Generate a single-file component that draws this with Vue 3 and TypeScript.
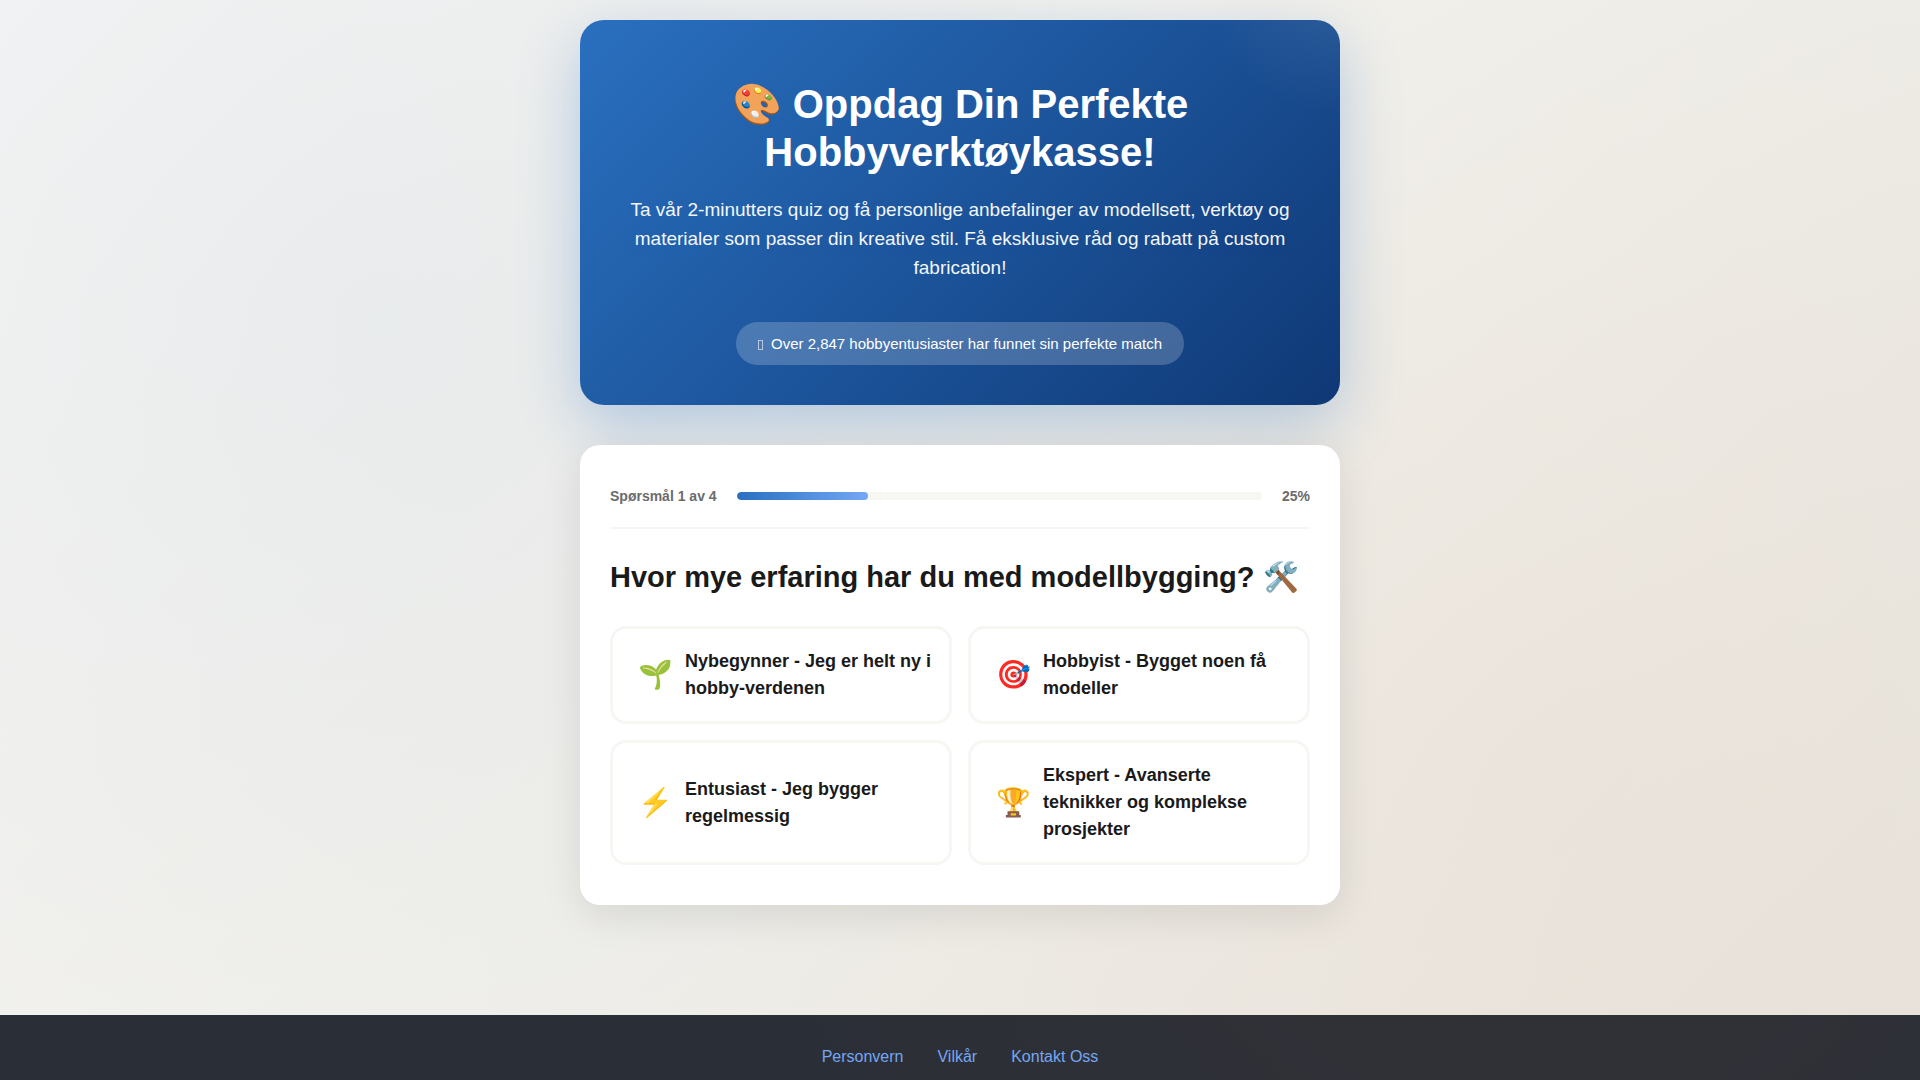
<script setup lang="ts">
import { computed, ref } from 'vue'

interface Option {
  id: string
  icon: string
  label: string
}

const step = ref(1)
const total = 4
const percent = computed(() => Math.round((step.value / total) * 100))

const options: Option[] = [
  { id: 'beginner', icon: '🌱', label: 'Nybegynner - Jeg er helt ny i hobby-verdenen' },
  { id: 'hobbyist', icon: '🎯', label: 'Hobbyist - Bygget noen få modeller' },
  { id: 'enthusiast', icon: '⚡', label: 'Entusiast - Jeg bygger regelmessig' },
  { id: 'expert', icon: '🏆', label: 'Ekspert - Avanserte teknikker og komplekse prosjekter' },
]
const selected = ref<string | null>(null)
</script>

<template>
  <div class="page">
    <main class="container">
      <section class="hero">
        <h1>🎨 Oppdag Din Perfekte Hobbyverktøykasse!</h1>
        <p class="lead">
          Ta vår 2-minutters quiz og få personlige anbefalinger av modellsett, verktøy og materialer
          som passer din kreative stil. Få eksklusive råd og rabatt på custom fabrication!
        </p>
        <div class="badge">
          <span class="badge-icon" aria-hidden="true"></span>
          <span>Over 2,847 hobbyentusiaster har funnet sin perfekte match</span>
        </div>
      </section>

      <section class="quiz">
        <div class="progress">
          <span>Spørsmål {{ step }} av {{ total }}</span>
          <div class="track" role="progressbar" aria-label="Fremdrift" :aria-valuenow="percent" aria-valuemin="0" aria-valuemax="100">
            <div class="fill" :style="{ width: percent + '%' }"></div>
          </div>
          <span>{{ percent }}%</span>
        </div>
        <h2>Hvor mye erfaring har du med modellbygging? 🛠️</h2>
        <div class="options">
          <button
            v-for="option in options"
            :key="option.id"
            type="button"
            class="option"
            :class="{ selected: selected === option.id }"
            @click="selected = option.id"
          >
            <span class="option-icon">{{ option.icon }}</span>
            <span class="option-label">{{ option.label }}</span>
          </button>
        </div>
      </section>
    </main>

    <footer class="footer">
      <nav>
        <a href="#personvern">Personvern</a>
        <a href="#vilkar">Vilkår</a>
        <a href="#kontakt">Kontakt Oss</a>
      </nav>
    </footer>
  </div>
</template>

<style>
body {
  margin: 0;
  background: #f5f5f0;
}
</style>

<style scoped>
.page {
  position: relative;
  display: flex;
  flex-direction: column;
  min-height: 100vh;
  box-sizing: border-box;
  background: linear-gradient(135deg, #f5f5f4 0%, #f0efea 50%, #e7e3dc 100%);
  color: #1a1a1a;
  font-family: "Liberation Sans", Arial, sans-serif;
  font-size: 16px;
  line-height: 24px;
}

.page::before {
  content: "";
  position: absolute;
  inset: 0;
  z-index: 1;
  pointer-events: none;
  background:
    radial-gradient(circle at 20% 30%, rgba(56, 106, 180, 0.05) 0%, transparent 50%),
    radial-gradient(circle at 80% 70%, rgba(225, 140, 90, 0.05) 0%, transparent 50%);
}

.container {
  position: relative;
  z-index: 2;
  display: flex;
  flex-direction: column;
  gap: 40px;
  width: 100%;
  max-width: 800px;
  box-sizing: border-box;
  margin: 0 auto;
  padding: 20px 20px 110px;
}

.hero {
  position: relative;
  overflow: hidden;
  padding: 60px 40px 40px;
  border-radius: 24px;
  background: linear-gradient(135deg, #2a70bf 0%, #1b5298 55%, #0f3875 100%);
  box-shadow: 0 20px 60px rgba(42, 111, 191, 0.3);
  color: #fff;
  text-align: center;
}

.hero::before {
  content: "";
  position: absolute;
  top: -50%;
  right: -20%;
  width: 300px;
  height: 300px;
  border-radius: 50%;
  background: radial-gradient(circle, rgba(255, 255, 255, 0.1) 0%, transparent 65%);
}

h1 {
  margin: 0 0 19px;
  font-size: 40px;
  line-height: 48px;
}

.lead {
  margin: 0 0 40px;
  font-size: 19px;
  line-height: 29px;
  opacity: 0.95;
}

.badge {
  display: inline-flex;
  align-items: center;
  gap: 8px;
  padding: 10px 22px;
  border-radius: 25px;
  background: rgba(255, 255, 255, 0.2);
  font-size: 15px;
  line-height: 23px;
  vertical-align: top;
}

.badge-icon {
  width: 5px;
  height: 10px;
  margin-top: 3px;
  box-sizing: border-box;
  border: 1px solid rgba(255, 255, 255, 0.6);
}

.quiz {
  position: relative;
  padding: 40px 30px;
  border-radius: 20px;
  background: #fff;
  box-shadow: 0 10px 40px rgba(0, 0, 0, 0.1);
}

.progress {
  display: flex;
  align-items: center;
  gap: 20px;
  margin-bottom: 30px;
  padding-bottom: 20px;
  border-bottom: 2px solid #f6f6f2;
  color: #6b6b6b;
  font-size: 14px;
  font-weight: 700;
  line-height: 22px;
}

.track {
  flex: 1;
  height: 8px;
  overflow: hidden;
  border-radius: 4px;
  background: #f6f6f2;
}

.fill {
  height: 100%;
  border-radius: 4px;
  background: linear-gradient(90deg, #2a6fbf, #74a7f5);
}

h2 {
  margin: 0 0 30px;
  font-size: 29px;
  line-height: 37px;
}

.options {
  display: grid;
  grid-template-columns: repeat(auto-fit, minmax(280px, 1fr));
  gap: 16px;
}

.option {
  display: flex;
  align-items: center;
  gap: 12px;
  padding: 19px 16px 19px 25px;
  border: 3px solid #f6f6f2;
  border-radius: 16px;
  background: #fff;
  color: inherit;
  font: inherit;
  text-align: left;
  cursor: pointer;
}

.option.selected {
  border-color: #2a6fbf;
}

.option-icon {
  font-size: 28px;
  line-height: 44px;
}

.option-label {
  flex: 1;
  font-size: 18px;
  font-weight: 700;
  line-height: 27px;
}

.footer {
  flex: 1;
  padding: 30px 20px 0;
  background: #2a2e36;
}

.footer nav {
  display: flex;
  justify-content: center;
  gap: 34px;
}

.footer a {
  color: #74a7f5;
  text-decoration: none;
}
</style>
